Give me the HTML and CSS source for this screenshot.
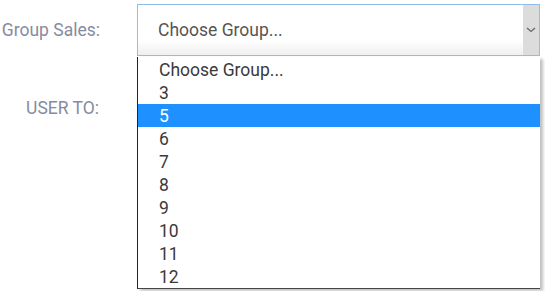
FILE: index.html
```html
<!DOCTYPE html>
<html>
<head>
<meta charset="utf-8">
<link rel="stylesheet" href="styles.css">
</head>
<body>
<div class="form">
  <div class="row row-group">
    <label class="label">Group Sales:</label>
    <div class="field">
      <div class="select">
        <span class="select-text">Choose Group...</span>
        <span class="select-arrow">
          <svg width="10" height="6" viewBox="0 0 10 6"><path d="M1 1 L5 4.5 L9 1" fill="none" stroke="#666" stroke-width="1.3"/></svg>
        </span>
      </div>
      <ul class="dropdown">
        <li>Choose Group...</li>
        <li>3</li>
        <li class="active">5</li>
        <li>6</li>
        <li>7</li>
        <li>8</li>
        <li>9</li>
        <li>10</li>
        <li>11</li>
        <li>12</li>
      </ul>
    </div>
  </div>
  <div class="row row-user">
    <label class="label">USER TO:</label>
    <div class="field"></div>
  </div>
</div>
</body>
</html>
```

FILE: styles.css
```css
html, body {
  margin: 0;
  padding: 0;
  background: #fff;
  font-family: Roboto, "Liberation Sans", sans-serif;
}
body {
  min-height: 291px;
}
.form {
  padding-top: 4px;
  min-height: 287px;
}
.row {
  display: grid;
  grid-template-columns: 100px 403px;
  column-gap: 37px;
  align-items: center;
}
.label {
  text-align: right;
  color: #868b9f;
  font-size: 17.5px;
}
.row-user {
  margin-top: 42px;
}
.row-user .label {
  padding-right: 1px;
}
.field {
  position: relative;
}
.select {
  height: 50px;
  border: 1px solid #8fbdec;
  display: flex;
  align-items: center;
  background: linear-gradient(to bottom, #fff 0%, #fff 70%, #efefef 100%);
}
.select-text {
  flex: 1;
  padding-left: 20px;
  color: #555;
  font-size: 17.5px;
}
.select-arrow {
  width: 16px;
  align-self: stretch;
  background: #dcdcdc;
  display: flex;
  align-items: center;
  justify-content: center;
}
.dropdown {
  position: absolute;
  left: 0;
  top: 53px;
  width: 402px;
  margin: 0;
  padding: 1px 0 0 0;
  list-style: none;
  background: #fff;
  border-left: 1px solid #222;
  border-bottom: 1px solid #444;
  box-shadow: 3px 2px 3px rgba(0,0,0,0.25);
  z-index: 5;
}
.dropdown li {
  height: 23px;
  line-height: 24px;
  padding-left: 21px;
  font-size: 17.5px;
  color: #3a3a3a;
}
.dropdown li.active {
  background: #1e90ff;
  color: #fff;
}
```
